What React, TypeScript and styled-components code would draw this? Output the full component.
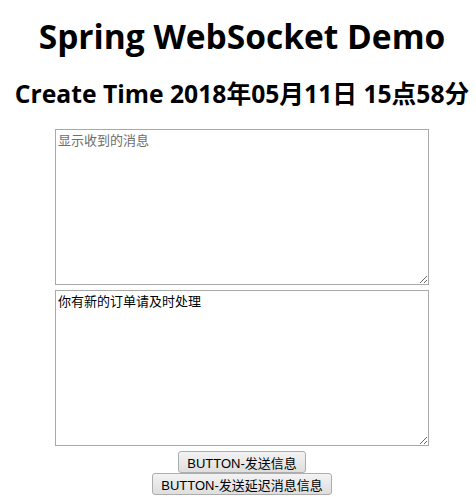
import React from "react";
import styled, { createGlobalStyle } from "styled-components";

const Global = createGlobalStyle`
  html, body { background: #fff; }
  body { margin: 0; padding: 0 0 0 8px; font-family: "Open Sans", "Noto Sans CJK SC", sans-serif; }
`;

const Page = styled.div`
  display: flex;
  flex-direction: column;
  align-items: center;
  width: 468px;
`;

const Title = styled.h1`
  margin: 14px 0 0;
  font-size: 33.5px;
  line-height: 44px;
  font-weight: 700;
  color: #000;
  font-family: "Open Sans", "Noto Sans CJK SC", sans-serif;
  letter-spacing: 0;
  white-space: nowrap;
`;

const SubTitle = styled.h2`
  margin: 19px 0 0;
  font-size: 24.7px;
  line-height: 34px;
  font-weight: 700;
  color: #000;
  font-family: "Open Sans", "Noto Sans CJK SC", sans-serif;
  letter-spacing: 0;
  white-space: nowrap;
`;

const Box = styled.textarea`
  box-sizing: border-box;
  width: 374px;
  height: 156px;
  margin-top: ${(p: { $gap: number }) => p.$gap}px;
  padding: 2px 2px;
  border: 1px solid #a9a9a9;
  border-radius: 0;
  font-family: "Noto Sans CJK SC", sans-serif;
  font-size: 13px;
  line-height: 15px;
  color: #000;
  background: #fff;
  outline: none;
  &::placeholder { color: #6e6e6e; }
`;

const Button = styled.button`
  margin-top: ${(p: { $gap: number }) => p.$gap}px;
  height: 22px;
  padding: 0 8px;
  font-family: "Liberation Sans", "Noto Sans CJK SC", sans-serif;
  font-size: 13px;
  color: #000;
  border: 1px solid #adadad;
  border-radius: 3px;
  background: linear-gradient(#f3f3f3, #dedede);
  cursor: pointer;
`;

export default function App() {
  return (
    <>
      <Global />
      <Page>
        <Title>Spring WebSocket Demo</Title>
        <SubTitle>Create Time 2018年05月11日 15点58分</SubTitle>
        <Box $gap={18} placeholder="显示收到的消息" />
        <Box $gap={5} defaultValue="你有新的订单请及时处理" />
        <Button $gap={5}>BUTTON-发送信息</Button>
        <Button $gap={0}>BUTTON-发送延迟消息信息</Button>
      </Page>
    </>
  );
}
